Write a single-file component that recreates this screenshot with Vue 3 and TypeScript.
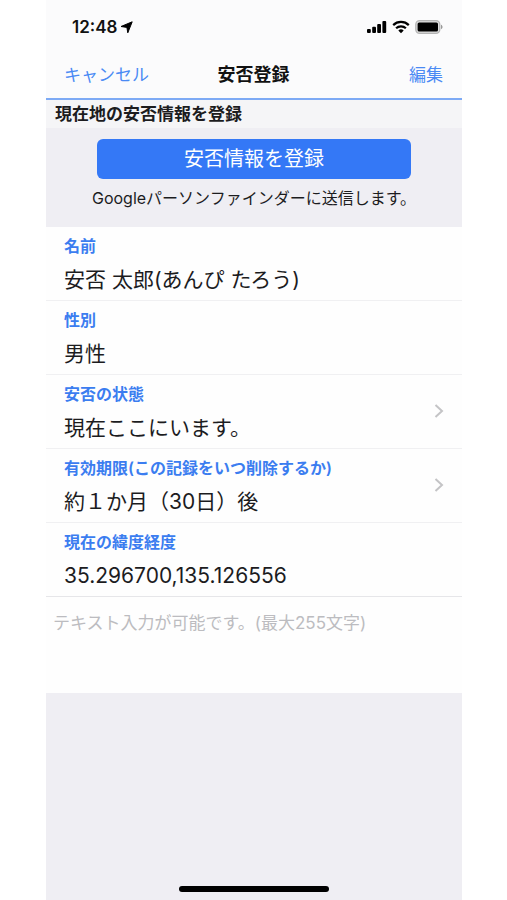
<script setup lang="ts">
import { ref } from 'vue'

interface Field {
  label: string
  value: string
  selectable: boolean
}

const fields: Field[] = [
  { label: '名前', value: '安否 太郎(あんぴ たろう)', selectable: false },
  { label: '性別', value: '男性', selectable: false },
  { label: '安否の状態', value: '現在ここにいます。', selectable: true },
  { label: '有効期限(この記録をいつ削除するか)', value: '約１か月（30日）後', selectable: true },
  { label: '現在の緯度経度', value: '35.296700,135.126556', selectable: false },
]

const message = ref('')
</script>

<template>
  <main class="screen">
    <header class="top">
      <div class="status">
        <div class="clock">
          <span>12:48</span>
          <svg width="13" height="13" viewBox="0 0 13 13" aria-hidden="true">
            <path d="M12.2.8 7.8 11.8 6.9 6.4 1 5.5Z" fill="#000" stroke="#000" stroke-width="1" stroke-linejoin="round" />
          </svg>
        </div>
        <div class="indicators">
          <svg width="20" height="14" viewBox="0 0 20 14" aria-hidden="true">
            <rect x="0" y="9" width="3.8" height="4" rx="1" />
            <rect x="5.2" y="6.8" width="3.8" height="6.2" rx="1" />
            <rect x="10.2" y="4" width="3.8" height="9" rx="1" />
            <rect x="15.4" y="1" width="3.8" height="12" rx="1" />
          </svg>
          <svg width="18" height="14" viewBox="0 0 18 14" aria-hidden="true">
            <g fill="none" stroke="#000" stroke-width="2.2">
              <path d="M1.2 5.1a11.2 11.2 0 0 1 15.6 0" />
              <path d="M4.1 8.3a7 7 0 0 1 9.8 0" />
            </g>
            <path d="M9 13.2 6.3 10.5a3.9 3.9 0 0 1 5.4 0Z" />
          </svg>
          <svg width="28" height="14" viewBox="0 0 28 14" aria-hidden="true">
            <rect x=".8" y=".7" width="24" height="12.6" rx="3.8" fill="#ddd" stroke="#b4b4b4" stroke-width="1.3" />
            <rect x="2.6" y="2.4" width="20.4" height="9.2" rx="1.6" />
            <path d="M26 4.8c2 .7 2 3.7 0 4.4Z" fill="#999" />
          </svg>
        </div>
      </div>
      <nav class="bar">
        <button type="button" class="link">キャンセル</button>
        <h1>安否登録</h1>
        <button type="button" class="link end">編集</button>
      </nav>
    </header>

    <h2>現在地の安否情報を登録</h2>
    <section class="submit">
      <button type="button" class="primary">安否情報を登録</button>
      <p>Googleパーソンファインダーに送信します。</p>
    </section>

    <section class="fields">
      <component
        :is="field.selectable ? 'button' : 'div'"
        v-for="field in fields"
        :key="field.label"
        :type="field.selectable ? 'button' : undefined"
        class="field"
      >
        <span class="texts">
          <span class="label">{{ field.label }}</span>
          <span class="value">{{ field.value }}</span>
        </span>
        <svg v-if="field.selectable" width="10" height="16" viewBox="0 0 10 16" aria-hidden="true">
          <path d="M1.5 2 8 8l-6.5 6" fill="none" stroke="#c4c4c6" stroke-width="2" />
        </svg>
      </component>
    </section>

    <textarea
      v-model="message"
      maxlength="255"
      aria-label="メッセージ"
      placeholder="テキスト入力が可能です。(最大255文字)"
    ></textarea>

    <footer class="home"><span></span></footer>
  </main>
</template>

<style>
body {
  background: #fff;
}
</style>

<style scoped>
.screen {
  box-sizing: border-box;
  display: flex;
  flex-direction: column;
  min-height: 100vh;
  margin: 0 45px 0 46px;
  background: #efeef3;
  color: #1c1c1e;
  font-family: Inter, "Noto Sans CJK JP", sans-serif;
}

button {
  margin: 0;
  padding: 0;
  border: 0;
  background: none;
  color: inherit;
  font: inherit;
  text-align: left;
  cursor: pointer;
}

.top {
  border-bottom: 2px solid #7daaf5;
  background: #fbfbfc;
}

.status {
  display: flex;
  align-items: center;
  justify-content: space-between;
  padding: 15px 19px 13px 26px;
}

.clock {
  display: flex;
  align-items: center;
  gap: 3px;
  color: #111;
  font-size: 17px;
  font-weight: 600;
  line-height: 24px;
}

.indicators {
  display: flex;
  align-items: center;
  gap: 5px;
}

.bar {
  display: grid;
  grid-template-columns: 1fr auto 1fr;
  align-items: center;
  padding: 0 19px 0 18px;
  line-height: 46px;
}

.bar .link {
  color: #4a8af4;
  font-size: 17px;
}

.bar .end {
  text-align: right;
}

h1 {
  margin: 0;
  color: #111;
  font-size: 18px;
  font-weight: 600;
}

h2 {
  margin: 0;
  padding: 0 9px;
  background: #f5f5f7;
  font-size: 17px;
  font-weight: 600;
  line-height: 28px;
}

.submit {
  padding: 11px 51px 14px;
  text-align: center;
}

.primary {
  width: 100%;
  border-radius: 6px;
  background: #3478f6;
  color: #fff;
  font-size: 20px;
  line-height: 40px;
  text-align: center;
}

.submit p {
  margin: 0 -20px;
  padding-top: 4px;
  font-size: 16px;
  line-height: 30px;
}

.fields {
  background: #fefefe;
}

.field {
  box-sizing: border-box;
  display: flex;
  align-items: center;
  justify-content: space-between;
  width: 100%;
  padding: 5px 18px 0;
  border-bottom: 1px solid #f0f0f2;
}

.field:last-child {
  border-bottom-color: #e6e6e9;
}

.texts {
  display: flex;
  flex-direction: column;
}

.label {
  color: #3b7df0;
  font-size: 16px;
  font-weight: 600;
  line-height: 28px;
}

.value {
  font-size: 21px;
  line-height: 40px;
}

.field svg {
  margin-bottom: 6px;
}

textarea {
  display: block;
  box-sizing: border-box;
  width: 100%;
  height: 96px;
  padding: 12px 7px;
  border: 0;
  background: #fefefe;
  color: inherit;
  font: inherit;
  font-size: 17px;
  line-height: 28px;
  resize: none;
}

textarea::placeholder {
  color: #bcbcc0;
  opacity: 1;
}

.home {
  display: flex;
  justify-content: center;
  margin-top: auto;
  padding-bottom: 8px;
}

.home span {
  width: 36%;
  height: 6px;
  border-radius: 3px;
  background: #000;
}
</style>
